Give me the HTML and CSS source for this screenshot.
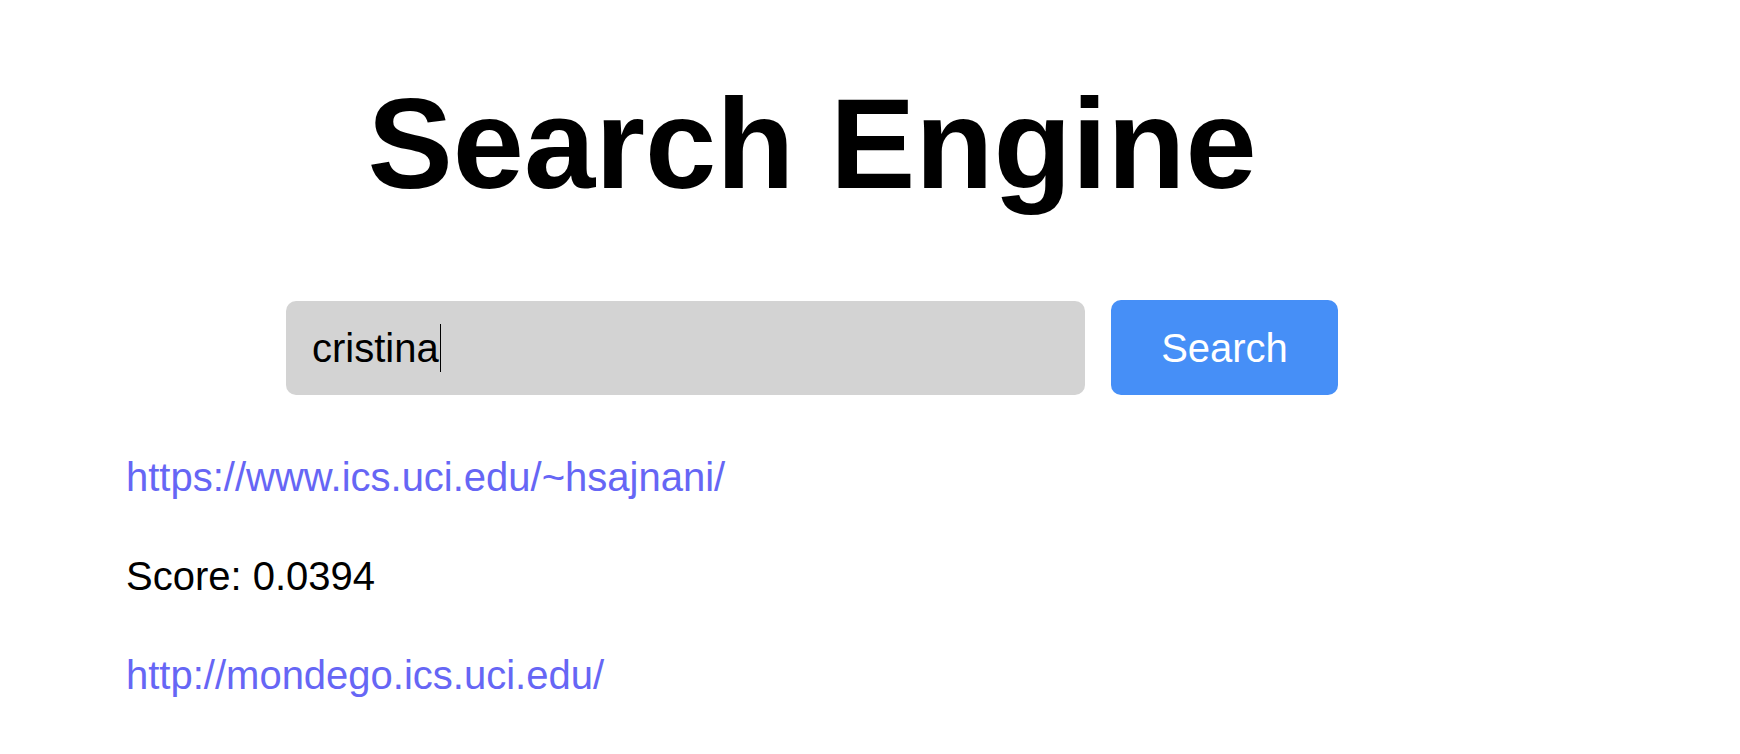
FILE: index.html
```html
<!DOCTYPE html>
<html lang="en">
<head>
<meta charset="utf-8">
<title>Search Engine</title>
<link rel="stylesheet" href="styles.css">
</head>
<body>
<main class="page">
  <h1 class="title">Search Engine</h1>
  <form class="search-form">
    <div class="search-input" role="textbox">cristina<span class="caret"></span></div>
    <button class="search-button" type="button">Search</button>
  </form>
  <div class="results">
    <a class="result-link" href="#">https://www.ics.uci.edu/~hsajnani/</a>
    <p class="result-score">Score: 0.0394</p>
    <a class="result-link" href="#">http://mondego.ics.uci.edu/</a>
  </div>
</main>
</body>
</html>
```

FILE: styles.css
```css
html, body {
  margin: 0;
  padding: 0;
  background: #ffffff;
}

body {
  font-family: "Liberation Sans", Arial, Helvetica, sans-serif;
  color: #000000;
}

.page {
  width: 1372px;
  margin-left: 126px;
  padding-top: 70px;
  display: flex;
  flex-direction: column;
}

.title {
  margin: 0;
  font-size: 128px;
  line-height: 1.15;
  font-weight: 700;
  text-align: center;
}

.search-form {
  margin: 84px 0 0 0;
  display: flex;
  justify-content: center;
  gap: 26px;
}

.search-input {
  box-sizing: border-box;
  width: 799px;
  height: 94px;
  padding: 0 26px;
  background: #d3d3d3;
  border-radius: 10px;
  display: flex;
  align-items: center;
  font-size: 40px;
  line-height: 46px;
  color: #000000;
}

.caret {
  display: inline-block;
  width: 1px;
  height: 48px;
  background: #000000;
  margin-left: 1px;
}

.search-button {
  box-sizing: border-box;
  width: 227px;
  height: 95px;
  margin-top: -1px;
  border: none;
  border-radius: 10px;
  background: #468ff7;
  color: #ffffff;
  font-family: "Liberation Sans", Arial, Helvetica, sans-serif;
  font-size: 40px;
  line-height: 46px;
  padding: 0;
}

.results {
  margin-top: 59px;
  display: flex;
  flex-direction: column;
  align-items: flex-start;
  gap: 53px;
}

.result-link {
  font-size: 40px;
  line-height: 46px;
  color: #6666f5;
  text-decoration: none;
}

.result-score {
  margin: 0;
  font-size: 40px;
  line-height: 46px;
  color: #000000;
}
```
